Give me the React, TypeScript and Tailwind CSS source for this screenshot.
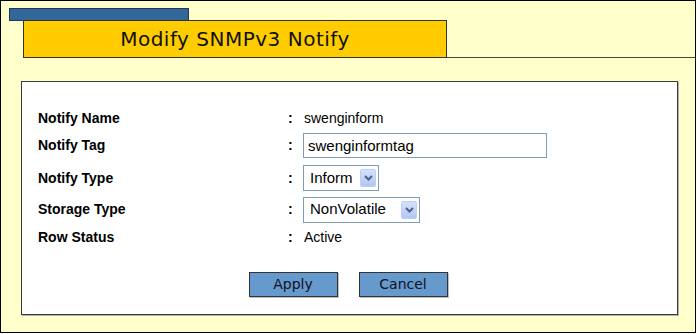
import React, { useState } from "react";

function SelectBox({ value, options, width }: { value: string; options: string[]; width: string }) {
  return (
    <div className={`relative flex h-[26px] items-center border border-[#7f9db9] bg-white pl-[6px] ${width}`}>
      <span className="text-[15px] text-black">{value}</span>
      {/* dropdown arrow */}
      <div className="absolute right-[2px] top-[3px] flex h-[18px] w-[16px] items-center justify-center rounded-[2px] border border-[#bccdf6] bg-gradient-to-b from-[#d4e0fd] to-[#b2c6f5]">
        <svg width="9" height="6" viewBox="0 0 9 6">
          <path d="M1 1 L4.5 4.5 L8 1" fill="none" stroke="#4d6185" strokeWidth="2" />
        </svg>
      </div>
      <select className="hidden" defaultValue={value}>
        {options.map((o) => (
          <option key={o}>{o}</option>
        ))}
      </select>
    </div>
  );
}

export default function App() {
  const [tag, setTag] = useState("swenginformtag");

  const label = "w-[250px] text-[14px] font-bold text-black";
  const colon = "w-[15px] text-[14px] font-bold text-black";

  return (
    <div className="h-[333px] w-[696px] border border-black bg-[#ffffcc] font-['Liberation_Sans',Arial,sans-serif]">
      {/* Header */}
      <div className="pt-[7px]">
        <div className="ml-[8px] h-[13px] w-[180px] border border-[#1f3a57] bg-[#336699]" />
        <div className="-mt-px flex items-end">
          <div className="ml-[22px] flex h-[38px] w-[424px] items-center justify-center border border-[#333333] bg-[#ffcc00] font-['DejaVu_Sans',Verdana,sans-serif] text-[20px] tracking-[0.5px] text-[#111111]">
            Modify SNMPv3 Notify
          </div>
          <div className="flex-1 border-b border-[#444444]" />
        </div>
      </div>

      {/* Form panel */}
      <div className="ml-[20px] mt-[23px] h-[234px] w-[657px] border border-[#3a3a3a] bg-white shadow-[1px_1px_0_#b0b0b0]">
        <div className="flex flex-col pl-[16px] pt-[23px]">
          <div className="flex h-[26px] items-center">
            <div className={label}>Notify Name</div>
            <div className={colon}>:</div>
            <div className="pl-[1px] text-[14px] text-black">swenginform</div>
          </div>
          <div className="flex h-[29px] items-center">
            <div className={label}>Notify Tag</div>
            <div className={colon}>:</div>
            <input
              value={tag}
              onChange={(e) => setTag(e.target.value)}
              className="h-[25px] w-[244px] border border-[#7f9db9] bg-white pl-[4px] text-[15px] text-black outline-none"
            />
          </div>
          <div className="flex h-[36px] items-center">
            <div className={label}>Notify Type</div>
            <div className={colon}>:</div>
            <SelectBox value="Inform" options={["Trap", "Inform"]} width="w-[76px]" />
          </div>
          <div className="flex h-[27px] items-center">
            <div className={label}>Storage Type</div>
            <div className={colon}>:</div>
            <SelectBox value="NonVolatile" options={["Volatile", "NonVolatile"]} width="w-[117px]" />
          </div>
          <div className="flex h-[28px] items-center">
            <div className={label}>Row Status</div>
            <div className={colon}>:</div>
            <div className="pl-[1px] text-[14px] text-black">Active</div>
          </div>
        </div>

        {/* Buttons */}
        <div className="mt-[21px] flex justify-center gap-[21px] pr-[3px] font-['DejaVu_Sans',Verdana,sans-serif]">
          <button className="h-[25px] w-[89px] border border-[#333333] bg-[#6699cc] text-[14px] text-[#111122] shadow-[1px_1px_0_#c0c0c0]">
            Apply
          </button>
          <button className="h-[25px] w-[89px] border border-[#333333] bg-[#6699cc] text-[14px] text-[#111122] shadow-[1px_1px_0_#c0c0c0]">
            Cancel
          </button>
        </div>
      </div>
    </div>
  );
}
